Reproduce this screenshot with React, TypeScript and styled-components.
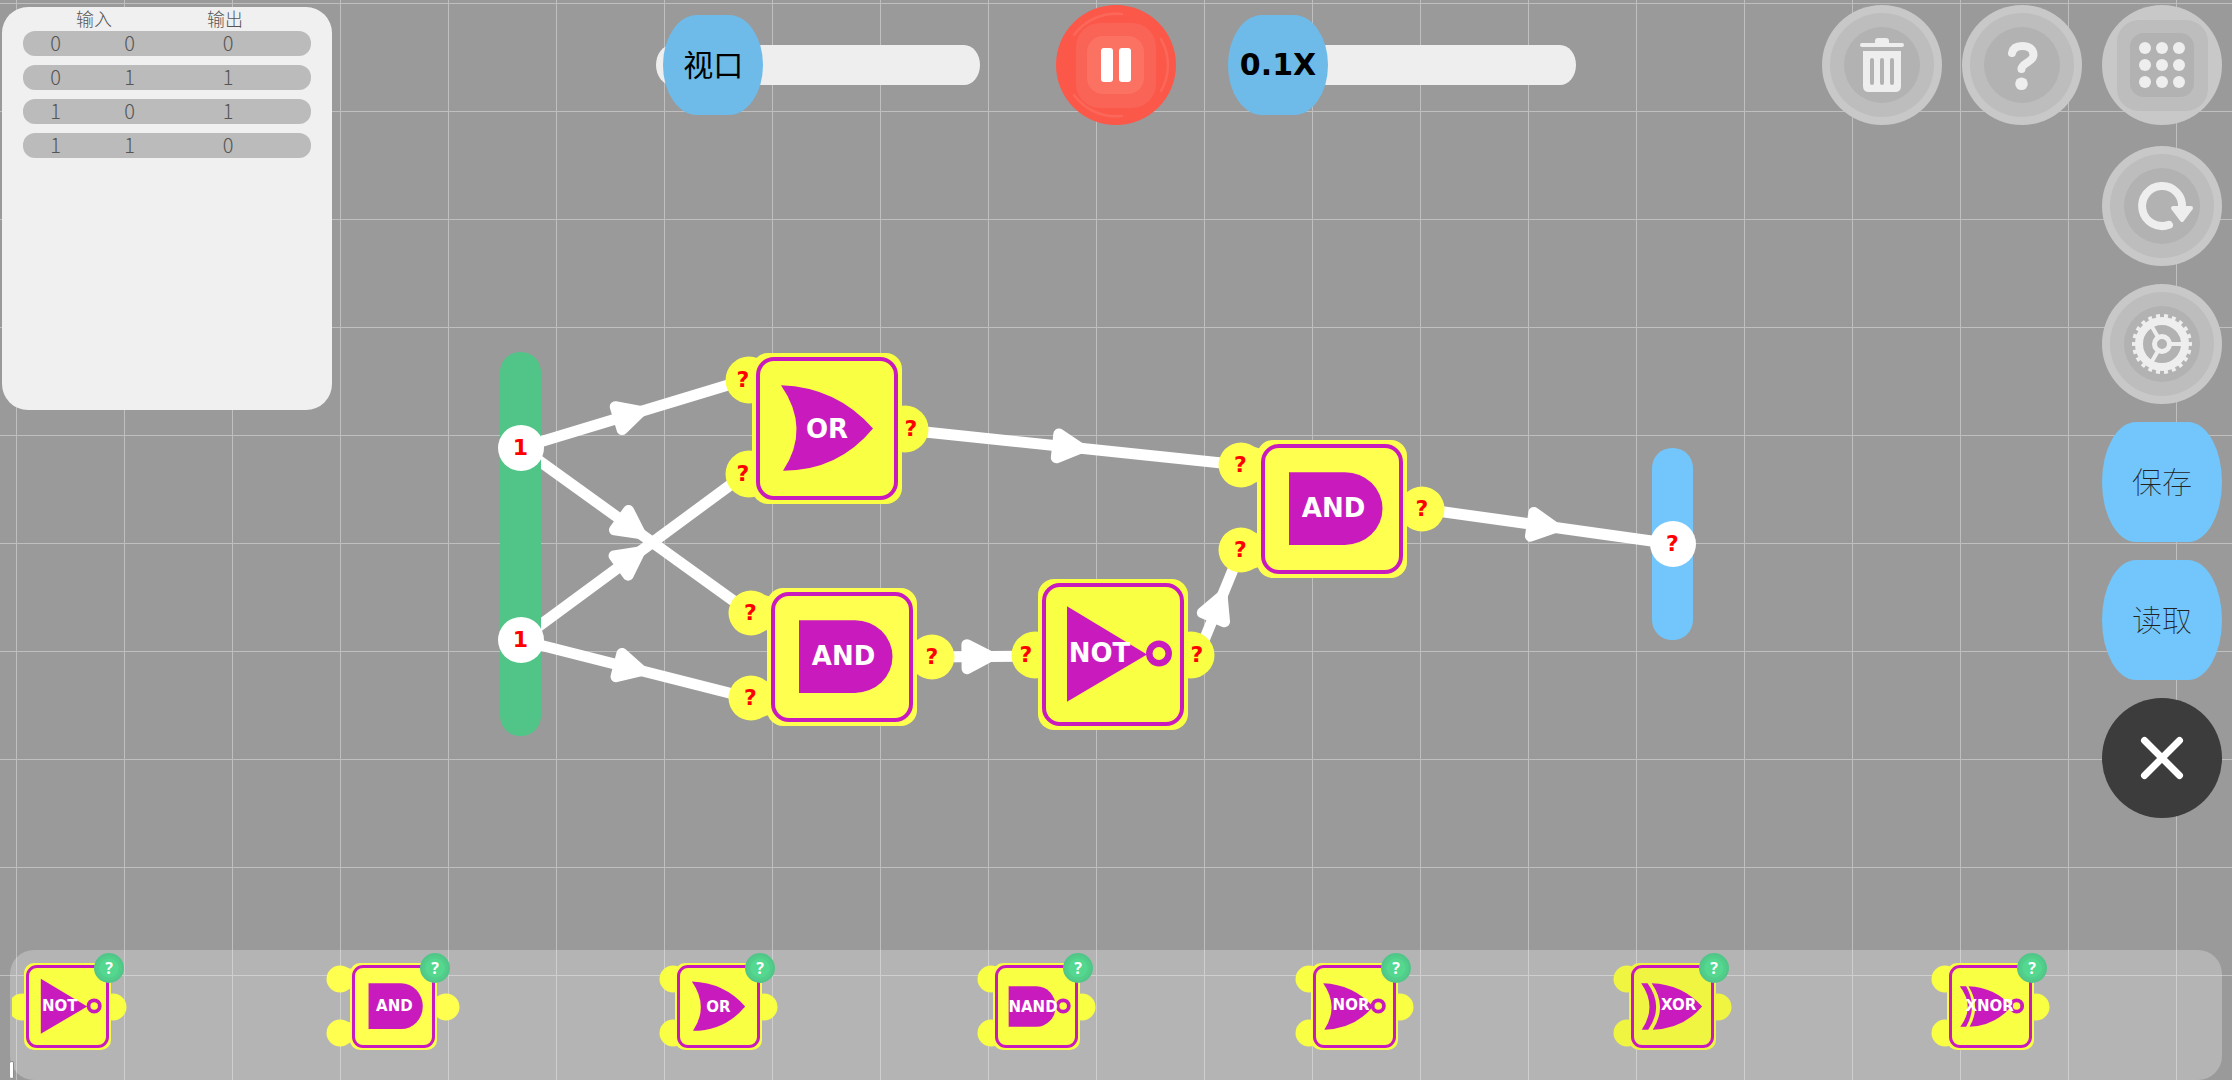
import React, { useState } from "react";
import styled, { createGlobalStyle, css } from "styled-components";

const color = {
  board: "#9a9a9a",
  grid: "#bfbfbf",
  magenta: "#c91bbd",
  sky: "#72c6fb",
  knob: "#6ebbea",
  green: "#51c487",
};

const wide = `"DejaVu Sans", Verdana, sans-serif`;
const cjk = `"Noto Sans CJK SC", "Noto Sans", sans-serif`;

const GlobalStyle = createGlobalStyle`
  *, *::before, *::after { box-sizing: border-box; }
  body { margin: 0; background: ${color.board}; font-family: ${cjk}; }
  button { border: 0; padding: 0; background: none; font: inherit; cursor: pointer; }
`;

/* ---------- Page frame ---------- */

const Page = styled.div`
  position: relative;
  display: flex;
  flex-direction: column;
  min-height: 100vh;
  overflow: hidden;
  background-color: ${color.board};
  background-image: linear-gradient(${color.grid} 1px, transparent 1px),
    linear-gradient(90deg, ${color.grid} 1px, transparent 1px);
  background-size: 108px 108px;
  background-position: 16px 3px;
`;

const Hud = styled.header`
  position: relative;
  display: grid;
  grid-template-columns: 1fr auto 1fr;
  align-items: start;
  padding-top: 5px;
  pointer-events: none;

  & > * {
    pointer-events: auto;
  }
`;

/* ---------- Truth table ---------- */

const TablePanel = styled.section`
  width: 330px;
  min-height: 403px;
  margin: 2px 0 0 2px;
  padding: 0 21px;
  border-radius: 26px;
  background: #f0f0f0;
`;

const Table = styled.table`
  display: block;
  color: #555;
  font-weight: 300;
`;

const TableHead = styled.thead`
  display: block;
`;

const TableBody = styled.tbody`
  display: flex;
  flex-direction: column;
  gap: 9px;
`;

const TableRow = styled.tr<{ $filled?: boolean }>`
  display: grid;
  grid-template-columns: 65fr 83fr 114fr 26fr;
  align-items: center;
  height: 24px;
  ${(p) =>
    p.$filled &&
    css`
      height: 25px;
      border-radius: 12px;
      background: #bbb;
    `}
`;

const HeadCell = styled.th<{ $span?: number }>`
  grid-column: span ${(p) => p.$span ?? 1};
  padding: 0 6px 2px 0;
  font-size: 18px;
  line-height: 22px;
  font-weight: 300;
  text-align: center;
`;

const Cell = styled.td`
  padding: 0 0 1px;
  font-size: 20px;
  line-height: 24px;
  text-align: center;
`;

const truthTable = [
  [0, 0, 0],
  [0, 1, 1],
  [1, 0, 1],
  [1, 1, 0],
];

function TruthTable() {
  return (
    <TablePanel>
      <Table>
        <TableHead>
          <TableRow>
            <HeadCell $span={2} colSpan={2}>输入</HeadCell>
            <HeadCell>输出</HeadCell>
          </TableRow>
        </TableHead>
        <TableBody>
          {truthTable.map((row, i) => (
            <TableRow key={i} $filled>
              {row.map((value, j) => (
                <Cell key={j}>{value}</Cell>
              ))}
            </TableRow>
          ))}
        </TableBody>
      </Table>
    </TablePanel>
  );
}

/* ---------- Sliders ---------- */

const KNOB = 100;

const Controls = styled.div`
  display: flex;
  align-items: center;
  gap: 52px;
`;

const SliderLabel = styled.label`
  position: relative;
  display: flex;
  align-items: center;
  width: 372px;
  height: ${KNOB}px;
  padding: 0 24px;
`;

const Rail = styled.span`
  flex: 1;
  height: 40px;
  border-radius: 16px / 20px;
  background: #eee;
`;

const Range = styled.input`
  position: absolute;
  inset: 0;
  width: 100%;
  height: 100%;
  margin: 0;
  appearance: none;
  background: transparent;
  cursor: pointer;

  &::-webkit-slider-thumb {
    appearance: none;
    width: ${KNOB}px;
    height: ${KNOB}px;
    border: 0;
    border-radius: 34px / 50px;
    background: ${color.knob};
  }
`;

const KnobText = styled.span<{ $wide?: boolean }>`
  position: absolute;
  top: 0;
  width: ${KNOB}px;
  color: #000;
  font-family: ${(p) => (p.$wide ? wide : cjk)};
  font-size: 30px;
  font-weight: ${(p) => (p.$wide ? 700 : 400)};
  line-height: ${(p) => (p.$wide ? 100 : 96)}px;
  text-align: center;
  pointer-events: none;
`;

type SliderProps = {
  name: string;
  initial: number;
  isWide?: boolean;
  text: (value: number) => string;
};

function Slider({ name, initial, isWide, text }: SliderProps) {
  const [value, setValue] = useState(initial);
  return (
    <SliderLabel>
      <Rail />
      <Range
        type="range"
        min={0}
        max={200}
        value={value}
        aria-label={name}
        onChange={(e) => setValue(Number(e.target.value))}
      />
      <KnobText $wide={isWide} style={{ left: `calc((100% - ${KNOB}px) * ${value / 200})` }}>
        {text(value)}
      </KnobText>
    </SliderLabel>
  );
}

/* ---------- Round buttons ---------- */

const RoundButton = styled.button<{ $tone?: string }>`
  width: 120px;
  height: 120px;
  border-radius: 50%;
  background: ${(p) => p.$tone ?? "#c8c8c8"};

  svg {
    display: block;
    width: 120px;
    height: 120px;
  }
`;

const PillButton = styled.button`
  width: 120px;
  height: 120px;
  padding-bottom: 4px;
  border-radius: 34px / 60px;
  background: ${color.sky};
  color: #222;
  font-size: 30px;
  font-weight: 100;
  line-height: 36px;
`;

const Side = styled.div`
  display: flex;
  flex-direction: column;
  align-items: flex-end;
  gap: 21px;
  padding-right: 10px;
`;

const ToolRow = styled.div`
  display: flex;
  gap: 20px;
`;

const ToolColumn = styled.div`
  display: flex;
  flex-direction: column;
  gap: 18px;
`;

const Rings = () => (
  <>
    <circle r="52" fill="#bdbdbd" />
    <circle r="38" fill="#b2b2b2" />
  </>
);

const TrashIcon = () => (
  <svg viewBox="-60 -60 120 120" aria-hidden="true">
    <Rings />
    <g fill="#eee">
      <path d="M-7 -21V-24Q-7 -27 -4 -27H4Q7 -27 7 -24V-21Z" />
      <rect x="-22" y="-22" width="44" height="4" rx="2" />
      <path d="M-19 -14H19V21Q19 27 13 27H-13Q-19 27 -19 21Z" />
    </g>
    <g fill="#b2b2b2">
      <rect x="-12" y="-7" width="4" height="27" rx="2" />
      <rect x="-2" y="-7" width="4" height="27" rx="2" />
      <rect x="8" y="-7" width="4" height="27" rx="2" />
    </g>
  </svg>
);

const HelpIcon = () => (
  <svg viewBox="-60 -60 120 120" aria-hidden="true">
    <Rings />
    <path
      d="M-10 -12C-9 -17 -5 -19 0 -19C7 -19 11.5 -16 11.5 -10C11.5 -3 -0.5 -2 -0.5 4"
      fill="none"
      stroke="#eee"
      strokeWidth="8"
      strokeLinecap="round"
    />
    <circle cx="-0.5" cy="18.7" r="6.3" fill="#eee" />
  </svg>
);

const MenuIcon = () => (
  <svg viewBox="-60 -60 120 120" aria-hidden="true">
    <rect x="-45" y="-45" width="91" height="91" rx="22" fill="#bdbdbd" />
    <rect x="-32" y="-32" width="64" height="64" rx="14" fill="#b2b2b2" />
    {[-17, 0, 17].map((y) =>
      [-17, 0, 17].map((x) => <circle key={`${x},${y}`} cx={x} cy={y} r="6" fill="#eee" />)
    )}
  </svg>
);

const ReloadIcon = () => (
  <svg viewBox="-60 -60 120 120" aria-hidden="true">
    <Rings />
    <path
      d="M7 18.8A20 20 0 1 1 20 2"
      fill="none"
      stroke="#eee"
      strokeWidth="8"
      strokeLinecap="round"
    />
    <path
      d="M11 2H29L20 14Z"
      fill="#eee"
      stroke="#eee"
      strokeWidth="4"
      strokeLinejoin="round"
    />
  </svg>
);

const GearIcon = () => (
  <svg viewBox="-60 -60 120 120" aria-hidden="true">
    <Rings />
    <g fill="none" stroke="#eee">
      <circle r="23" strokeWidth="8" />
      <circle r="28" strokeWidth="4" pathLength="44" strokeDasharray="1 1" strokeDashoffset="0.5" />
      <circle r="7.5" strokeWidth="5" />
      {[0, 120, 240].map((a) => (
        <path key={a} d="M9 0H20" strokeWidth="4" transform={`rotate(${a})`} />
      ))}
    </g>
  </svg>
);

const CloseIcon = () => (
  <svg viewBox="-60 -60 120 120" aria-hidden="true">
    <path
      d="M-17.5 -17.5L17.5 17.5M17.5 -17.5L-17.5 17.5"
      stroke="#fff"
      strokeWidth="7"
      strokeLinecap="round"
    />
  </svg>
);

const PauseIcon = () => (
  <svg viewBox="-60 -60 120 120" aria-hidden="true">
    <g fill="none" stroke="#fb6759" strokeWidth="2.5" strokeLinecap="round">
      <path d="M-42 -30A52 52 0 0 1 6 -51" />
      <path d="M-42 30A52 52 0 0 0 6 51" />
      <path d="M45 -26A52 52 0 0 1 45 26" />
    </g>
    <rect x="-40" y="-42" width="80" height="85" rx="24" fill="#f96456" />
    <rect x="-29" y="-29" width="57" height="58" rx="16" fill="#fb7263" />
    <rect x="-15" y="-17" width="12" height="34" rx="3" fill="#fff" />
    <rect x="3" y="-17" width="12" height="34" rx="3" fill="#fff" />
  </svg>
);

/* ---------- Logic gates ---------- */

type Kind = "NOT" | "AND" | "OR" | "NAND" | "NOR" | "XOR" | "XNOR";

type GateShape = {
  paths: string[];
  bubble?: number;
  label: [number, number];
  fill: string;
  left: number;
  right: number;
  inputs: number[];
};

const pair = [18, 80];

/* Outlines live in a 150 x 150 box that is stretched over the gate body. */
const shapes: Record<Kind, GateShape> = {
  NOT: {
    paths: ["M29 27L109 75L29 122Z"],
    bubble: 121,
    label: [41, 49],
    fill: "#f9ff42",
    left: -2,
    right: 2,
    inputs: [50],
  },
  AND: {
    paths: ["M32 35H88A37.5 39.5 0 0 1 88 114H32Z"],
    label: [51, 49],
    fill: "#feff4f",
    left: -11,
    right: 10,
    inputs: pair,
  },
  OR: {
    paths: ["M29 32Q85 34 121 75Q86 117 31 117Q59 75 29 32Z"],
    label: [50, 50],
    fill: "#f9ff42",
    left: -2,
    right: 2,
    inputs: pair,
  },
  NAND: {
    paths: ["M27 40H75A33 35 0 0 1 75 110H27Z"],
    bubble: 121,
    label: [46, 50],
    fill: "#f9ff42",
    left: -2,
    right: 2,
    inputs: pair,
  },
  NOR: {
    paths: ["M21 35Q72 37 107 75Q76 113 23 115Q49 75 21 35Z"],
    bubble: 116,
    label: [46, 48],
    fill: "#f9ff42",
    left: -2,
    right: 2,
    inputs: pair,
  },
  XOR: {
    paths: [
      "M21 35H32Q61 75 33 115H22Q49 75 21 35Z",
      "M39 35Q92 37 126 75Q94 113 41 115Q67 75 39 35Z",
    ],
    label: [57, 48],
    fill: "#f0f541",
    left: -2,
    right: 2,
    inputs: pair,
  },
  XNOR: {
    paths: [
      "M22 40H33Q53 75 33 110H23Q49 75 22 40Z",
      "M37 40Q83 42 111 75Q83 108 39 110Q59 75 37 40Z",
    ],
    bubble: 120,
    label: [49, 49],
    fill: "#f9ff42",
    left: -2,
    right: 2,
    inputs: pair,
  },
};

const GateBody = styled.button<{ $w: number; $h: number; $fill: string }>`
  position: relative;
  display: block;
  width: ${(p) => p.$w}px;
  height: ${(p) => p.$h}px;
  border-radius: ${(p) => (p.$w > 100 ? 16 : 10)}px;
  background: ${(p) => p.$fill};
`;

const GateFrame = styled.span<{ $big: boolean; $fill: string }>`
  position: absolute;
  inset: ${(p) => (p.$big ? 4 : 2)}px;
  border: ${(p) => (p.$big ? 4 : 3)}px solid ${color.magenta};
  border-radius: ${(p) => (p.$big ? 18 : 11)}px;
  background: ${(p) => p.$fill};
`;

const GateGlyph = styled.svg`
  position: absolute;
  inset: 0;
  width: 100%;
  height: 100%;
`;

const GateName = styled.span<{ $big: boolean; $x: number; $y: number }>`
  position: absolute;
  left: ${(p) => p.$x}%;
  top: ${(p) => p.$y}%;
  transform: translate(-50%, -50%);
  color: #fff;
  font-family: ${wide};
  font-size: ${(p) => (p.$big ? 26 : 15)}px;
  font-weight: 700;
  line-height: 1;
  white-space: nowrap;
`;

const Port = styled.span<{ $size: number; $x: number; $y: number; $side: "left" | "right"; $fill: string }>`
  position: absolute;
  left: ${(p) => (p.$side === "left" ? `${p.$x}%` : `${100 + p.$x}%`)};
  top: ${(p) => p.$y}%;
  width: ${(p) => p.$size}px;
  height: ${(p) => p.$size}px;
  transform: translate(-50%, -50%);
  border-radius: 50%;
  background: ${(p) => p.$fill};
`;

/* Joins a port that stands clear of the body back to it. */
const Neck = styled.span<{ $y: number; $side: "left" | "right"; $big: boolean }>`
  position: absolute;
  ${(p) => p.$side}: -11%;
  top: ${(p) => p.$y}%;
  width: 14%;
  height: ${(p) => (p.$big ? 44 : 26)}px;
  transform: translateY(-50%);
  background: ${shapes.AND.fill};
  clip-path: ${(p) =>
    p.$side === "left"
      ? "polygon(0 0, 100% 14%, 100% 86%, 0 100%)"
      : "polygon(0 14%, 100% 0, 100% 100%, 0 86%)"};
`;

const Signal = styled.span<{ $x: number; $y: number }>`
  position: absolute;
  left: ${(p) => p.$x}%;
  top: ${(p) => p.$y}%;
  transform: translate(-50%, -50%);
  color: #f00;
  font-family: ${wide};
  font-size: 22px;
  font-weight: 700;
  line-height: 1;
`;

type GateProps = { kind: Kind; width: number; height: number; signals?: boolean };

function Gate({ kind, width, height, signals }: GateProps) {
  const s = shapes[kind];
  const big = width > 100;
  const size = big ? (kind === "AND" ? 45 : 47) : 27;
  return (
    <GateBody type="button" $w={width} $h={height} $fill={s.fill}>
      {s.inputs.map((y) => (
        <Port key={y} $side="left" $x={s.left} $y={y} $size={size} $fill={s.fill} />
      ))}
      <Port $side="right" $x={s.right} $y={50} $size={size} $fill={s.fill} />
      {kind === "AND" && (
        <>
          {s.inputs.map((y) => (
            <Neck key={y} $side="left" $y={y} $big={big} />
          ))}
          <Neck $side="right" $y={50} $big={big} />
        </>
      )}
      <GateFrame $big={big} $fill={s.fill} />
      <GateGlyph viewBox="0 0 150 150" preserveAspectRatio="none" aria-hidden="true">
        {s.paths.map((d) => (
          <path key={d} d={d} fill={color.magenta} />
        ))}
        {s.bubble && (
          <circle
            cx={s.bubble}
            cy="74"
            r="9.7"
            fill={s.fill}
            stroke={color.magenta}
            strokeWidth="6.5"
          />
        )}
      </GateGlyph>
      <GateName $big={big} $x={s.label[0]} $y={s.label[1]}>
        {kind}
      </GateName>
      {signals && (
        <>
          {s.inputs.map((y) => (
            <Signal key={y} $x={kind === "AND" ? -11 : kind === "NOT" ? -8 : -6} $y={y}>
              ?
            </Signal>
          ))}
          <Signal $x={kind === "AND" ? 110 : 106} $y={50}>
            ?
          </Signal>
        </>
      )}
    </GateBody>
  );
}

/* ---------- Circuit canvas ---------- */

const Circuit = styled.main`
  position: absolute;
  inset: 0;
  overflow: hidden;
`;

const Wires = styled.svg`
  position: absolute;
  inset: 0;
  width: 100%;
  height: 100%;
`;

const Node = styled.div<{ $x: number; $y: number }>`
  position: absolute;
  left: ${(p) => p.$x}px;
  top: ${(p) => p.$y}px;
`;

const Terminal = styled.div<{ $tone: string; $h: number }>`
  display: flex;
  flex-direction: column;
  align-items: center;
  justify-content: space-around;
  width: 41px;
  height: ${(p) => p.$h}px;
  border-radius: 20px;
  background: ${(p) => p.$tone};
`;

const TerminalPort = styled.button`
  flex: none;
  width: 46px;
  height: 46px;
  border-radius: 50%;
  background: #fff;
  color: #f00;
  font-family: ${wide};
  font-size: 22px;
  font-weight: 700;
  line-height: 46px;
`;

type Wire = [number, number, number, number];

const wires: Wire[] = [
  [520, 448, 748, 379],
  [520, 447, 749, 612],
  [520, 640, 748, 472],
  [520, 640, 749, 698],
  [906, 430, 1241, 465],
  [932, 657, 1034, 656],
  [1198, 655, 1241, 550],
  [1423, 509, 1673, 544],
];

const gates: { kind: Kind; x: number; y: number; h: number }[] = [
  { kind: "OR", x: 752, y: 353, h: 151 },
  { kind: "AND", x: 767, y: 588, h: 138 },
  { kind: "NOT", x: 1038, y: 579, h: 151 },
  { kind: "AND", x: 1257, y: 440, h: 138 },
];

function CircuitCanvas() {
  return (
    <Circuit>
      <Wires aria-hidden="true">
        {wires.map(([x1, y1, x2, y2], i) => {
          const angle = (Math.atan2(y2 - y1, x2 - x1) * 180) / Math.PI;
          return (
            <g key={i} stroke="#fff" strokeWidth="11" fill="#fff" strokeLinejoin="round">
              <line x1={x1} y1={y1} x2={x2} y2={y2} />
              <path
                d="M-16 -12L7 0L-16 12Z"
                transform={`translate(${(x1 + x2) / 2} ${(y1 + y2) / 2}) rotate(${angle})`}
              />
            </g>
          );
        })}
      </Wires>
      <Node $x={500} $y={352}>
        <Terminal $tone={color.green} $h={384}>
          <TerminalPort type="button">1</TerminalPort>
          <TerminalPort type="button">1</TerminalPort>
        </Terminal>
      </Node>
      {gates.map((g) => (
        <Node key={`${g.x}-${g.y}`} $x={g.x} $y={g.y}>
          <Gate kind={g.kind} width={150} height={g.h} signals />
        </Node>
      ))}
      <Node $x={1652} $y={448}>
        <Terminal $tone={color.sky} $h={192}>
          <TerminalPort type="button">?</TerminalPort>
        </Terminal>
      </Node>
    </Circuit>
  );
}

/* ---------- Gate dock ---------- */

const Dock = styled.footer`
  position: relative;
  margin: auto 10px 0;
  padding: 0 2px;
  border-radius: 24px;
  background: rgba(255, 255, 255, 0.26);
`;

const DockList = styled.div`
  display: flex;
  gap: 200px;
  padding: 13px 0 30px;
  overflow: hidden;
`;

const DockItem = styled.div<{ $kind: Kind }>`
  flex: none;
  padding: ${(p) =>
    p.$kind === "AND" ? "0 23px 0 23px" : p.$kind === "NOT" ? "0 16px 0 12px" : "0 16px 0 15px"};
`;

const DockGate = styled.div`
  position: relative;
`;

const HelpBadge = styled.button`
  position: absolute;
  top: -10px;
  right: -13px;
  width: 30px;
  height: 30px;
  border-radius: 50%;
  background: radial-gradient(circle, #54d78f 0 9px, #52ce8b 10px 12px, #51c688 13px);
  color: #fff;
  font-family: "Noto Sans", sans-serif;
  font-size: 16px;
  font-weight: 700;
  line-height: 30px;
`;

const ScrollHandle = styled.span`
  position: absolute;
  left: 0;
  bottom: 1px;
  width: 4px;
  height: 18px;
  border: 1px solid #8a8a8a;
  border-left-width: 0;
  border-radius: 2px;
  background: #fff;
`;

const dockKinds: Kind[] = ["NOT", "AND", "OR", "NAND", "NOR", "XOR", "XNOR"];

export default function App() {
  return (
    <Page lang="zh-CN">
      <GlobalStyle />
      <CircuitCanvas />
      <Hud>
        <TruthTable />
        <Controls>
          <Slider name="视口" initial={23} text={() => "视口"} />
          <RoundButton type="button" $tone="#fb5849" aria-label="暂停">
            <PauseIcon />
          </RoundButton>
          <Slider
            name="速度"
            initial={0}
            isWide
            text={(v) => `${(0.1 + v / 20).toFixed(1)}X`}
          />
        </Controls>
        <Side>
          <ToolRow>
            <RoundButton type="button" aria-label="删除"><TrashIcon /></RoundButton>
            <RoundButton type="button" aria-label="帮助"><HelpIcon /></RoundButton>
            <RoundButton type="button" aria-label="菜单"><MenuIcon /></RoundButton>
          </ToolRow>
          <ToolColumn>
            <RoundButton type="button" aria-label="重置"><ReloadIcon /></RoundButton>
            <RoundButton type="button" aria-label="设置"><GearIcon /></RoundButton>
            <PillButton type="button">保存</PillButton>
            <PillButton type="button">读取</PillButton>
            <RoundButton type="button" $tone="#3c3c3c" aria-label="关闭"><CloseIcon /></RoundButton>
          </ToolColumn>
        </Side>
      </Hud>
      <Dock>
        <DockList>
          {dockKinds.map((kind) => (
            <DockItem key={kind} $kind={kind}>
              <DockGate>
                <Gate kind={kind} width={87} height={87} />
                <HelpBadge type="button">?</HelpBadge>
              </DockGate>
            </DockItem>
          ))}
        </DockList>
        <ScrollHandle />
      </Dock>
    </Page>
  );
}
